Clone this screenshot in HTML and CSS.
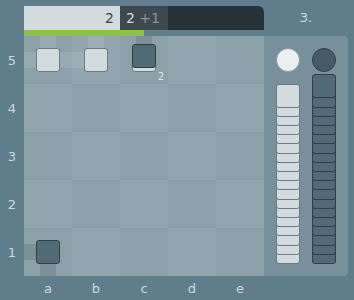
FILE: index.html
```html
<!DOCTYPE html>
<html lang="en">
<head>
  <meta charset="UTF-8">
  <meta name="viewport" content="width=device-width, initial-scale=1">
  <title>Tak board</title>
  <link rel="stylesheet" href="styles.css">
</head>
<body>
  <div class="game">
    <div class="scores">
      <div class="score player1" style="width: 40%;">2</div>
      <div class="score player2" style="width: 20%;">2 <span class="komi">+1</span></div>
      <div class="score rest" style="width: 40%;"></div>
    </div>
    <div class="move-number">3.</div>
    <div class="progress"><div class="progress-fill" style="width: 50%;"></div></div>

    <div class="ranks">
      <span>5</span><span>4</span><span>3</span><span>2</span><span>1</span>
    </div>

    <div class="board">
      <!-- rank 5 -->
      <div class="square dark">
        <div class="road light n"></div>
        <div class="road light w"></div>
        <div class="road light e"></div>
        <div class="piece flat white"></div>
      </div>
      <div class="square light">
        <div class="road light n"></div>
        <div class="road light w"></div>
        <div class="piece flat white"></div>
      </div>
      <div class="square dark">
        <div class="road dark n"></div>
        <div class="stack">
          <div class="piece flat white"></div>
          <div class="piece flat black"></div>
        </div>
        <div class="stack-count">2</div>
      </div>
      <div class="square light"></div>
      <div class="square dark"></div>
      <!-- rank 4 -->
      <div class="square light"></div>
      <div class="square dark"></div>
      <div class="square light"></div>
      <div class="square dark"></div>
      <div class="square light"></div>
      <!-- rank 3 -->
      <div class="square dark"></div>
      <div class="square light"></div>
      <div class="square dark"></div>
      <div class="square light"></div>
      <div class="square dark"></div>
      <!-- rank 2 -->
      <div class="square light"></div>
      <div class="square dark"></div>
      <div class="square light"></div>
      <div class="square dark"></div>
      <div class="square light"></div>
      <!-- rank 1 -->
      <div class="square dark">
        <div class="road dark w"></div>
        <div class="road dark s"></div>
        <div class="piece flat black"></div>
      </div>
      <div class="square light"></div>
      <div class="square dark"></div>
      <div class="square light"></div>
      <div class="square dark"></div>
    </div>

    <div class="reserves">
      <div class="reserve-col">
        <div class="cap white"></div>
        <div class="reserve" id="reserve-white"></div>
      </div>
      <div class="reserve-col">
        <div class="cap black"></div>
        <div class="reserve" id="reserve-black"></div>
      </div>
    </div>

    <div class="files">
      <span>a</span><span>b</span><span>c</span><span>d</span><span>e</span>
    </div>
  </div>

  <script>
    // Fill the piece reserves, top piece first and drawn above the rest
    function fillReserve(id, color, count) {
      const el = document.getElementById(id);
      for (let i = 0; i < count; i++) {
        const p = document.createElement('div');
        p.classList.add('piece', 'flat', color);
        p.style.zIndex = count - i;
        el.appendChild(p);
      }
    }
    fillReserve('reserve-white', 'white', 18);
    fillReserve('reserve-black', 'black', 19);
  </script>
</body>
</html>
```

FILE: styles.css
```css
/* Basic Reset */
* {
  margin: 0;
  padding: 0;
  box-sizing: border-box;
}

body {
  font-family: 'DejaVu Sans', 'Liberation Sans', sans-serif;
  background: #607d8b;
  color: #cfd8dc;
  padding-top: 6px;
}

/* Main layout */
.game {
  display: grid;
  grid-template-columns: 24px 240px 84px;
  grid-template-rows: 24px 6px 240px 24px;
  grid-template-areas:
    ". scores move"
    ". progress ."
    "ranks board reserves"
    ". files .";
}

/* Flat count bar */
.scores {
  grid-area: scores;
  display: flex;
  border-top-right-radius: 6px;
  overflow: hidden;
  font-size: 14px;
  line-height: 24px;
}
.score {
  height: 24px;
}
.score.player1 {
  background: #d3dbdf;
  color: #37474f;
  text-align: right;
  padding-right: 6px;
}
.score.player2 {
  background: #3e494f;
  color: #cfd8dc;
  padding-left: 6px;
  white-space: nowrap;
}
.score.player2 .komi {
  color: #8a9499;
}
.score.rest {
  background: #263238;
}

.move-number {
  grid-area: move;
  text-align: center;
  font-size: 13px;
  line-height: 24px;
  color: #cfd8dc;
}

.progress {
  grid-area: progress;
}
.progress-fill {
  height: 6px;
  background: #8bc34a;
}

/* Coordinates */
.ranks {
  grid-area: ranks;
  display: flex;
  flex-direction: column;
}
.ranks span,
.files span {
  display: flex;
  align-items: center;
  justify-content: center;
  font-size: 13px;
  color: #cfd8dc;
}
.ranks span {
  height: 48px;
}
.files {
  grid-area: files;
  display: flex;
}
.files span {
  width: 48px;
  height: 24px;
}

/* Board */
.board {
  grid-area: board;
  display: grid;
  grid-template-columns: repeat(5, 48px);
  grid-template-rows: repeat(5, 48px);
}
.square {
  display: grid;
  grid-template-columns: repeat(3, 16px);
  grid-template-rows: repeat(3, 16px);
}
.square.light {
  background: #93a6af;
}
.square.dark {
  background: #8ca0a9;
}

/* Road connections */
.road.light {
  background: rgba(255, 255, 255, 0.1);
}
.road.dark {
  background: rgba(0, 0, 0, 0.1);
}
.road.n { grid-area: 1 / 2; }
.road.s { grid-area: 3 / 2; }
.road.w { grid-area: 2 / 1; }
.road.e { grid-area: 2 / 3; }

/* Pieces */
.piece {
  width: 24px;
  height: 24px;
  border-radius: 3px;
  border: 1px solid;
}
.piece.white {
  background: #d3dbdf;
  border-color: #647c87;
}
.piece.black {
  background: #526a75;
  border-color: #2f3e45;
}
.square > .piece {
  grid-area: 1 / 1 / 4 / 4;
  place-self: center;
}

/* Stacked pieces share one cell, the top one sits 4px higher */
.stack {
  grid-area: 1 / 1 / 4 / 4;
  align-self: end;
  justify-self: center;
  margin-bottom: 12px;
  display: grid;
}
.stack .piece {
  grid-area: 1 / 1;
  margin-top: 4px;
}
.stack .piece:last-child {
  margin-top: 0;
  margin-bottom: 4px;
}
.stack-count {
  grid-area: 3 / 3;
  align-self: end;
  justify-self: end;
  margin: 0 4px 1px 0;
  font-size: 10px;
  line-height: 12px;
  color: #dfe6e9;
}

/* Reserves */
.reserves {
  grid-area: reserves;
  background: #78909c;
  border-top-right-radius: 4px;
  border-bottom-right-radius: 4px;
  display: flex;
  gap: 12px;
  padding: 12px;
}
.reserve-col {
  display: flex;
  flex-direction: column;
  width: 24px;
}
.cap {
  width: 24px;
  height: 24px;
  border-radius: 50%;
  border: 1px solid;
}
.cap.white {
  background: #eceff1;
  border-color: #8a9ea8;
}
.cap.black {
  background: #455a64;
  border-color: #2f3e45;
}
.reserve {
  margin-top: auto;
  display: flex;
  flex-direction: column;
}
.reserve .piece + .piece {
  margin-top: -14.8px;
}
```
